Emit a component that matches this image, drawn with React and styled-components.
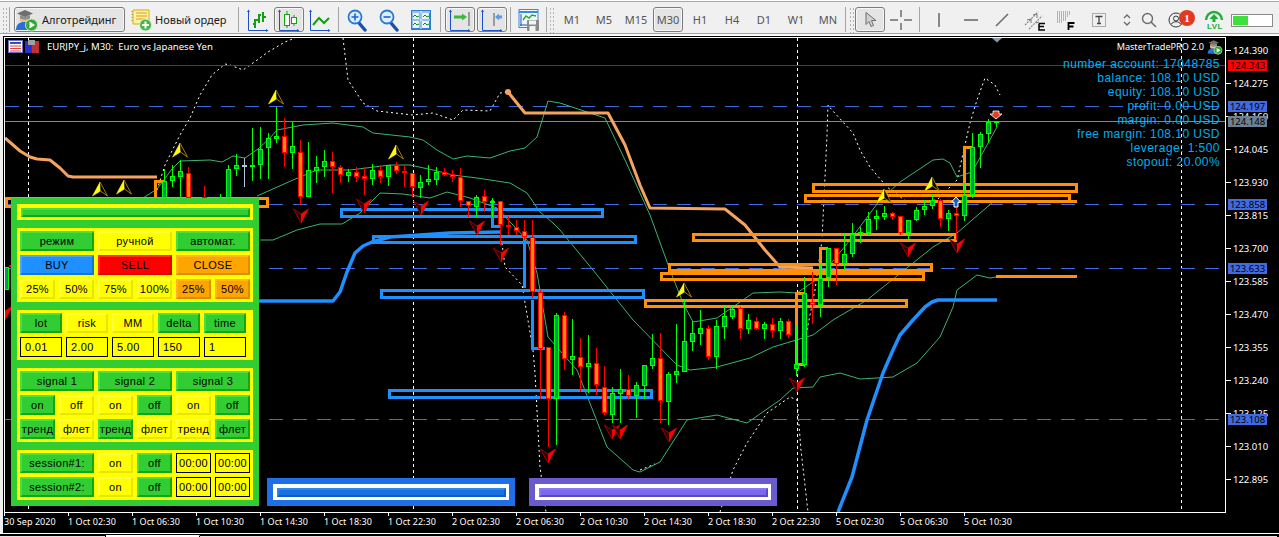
import React from "react";
import styled, { createGlobalStyle, css } from "styled-components";

const Global = createGlobalStyle`
  html, body { margin: 0; padding: 0; background: #f0f0f0; overflow: hidden; }
  * { box-sizing: border-box; }
`;
const UI = `"Noto Sans", "DejaVu Sans", sans-serif`;
const ARIAL = `"Liberation Sans", Arial, sans-serif`;

/* ---------- chart data ---------- */
const C = [
  [6,267,290,267,290,1],[11,265,266,262,272,0],
  [164,181,198,169,198,1],[172,176,181,165,187,1],[180,171,177,160,198,1],[188,173,198,167,198,0],[204,197,198,186,198,0],[220,197,198,194,198,1],
  [228,169,198,165,198,1],[236,165,169,154,176,1],[244,165,166,158,187,2],[252,165,166,128,181,1],
  [260,149,165,127,179,1],[268,138,148,133,179,1],[276,136,139,107,143,1],[284,136,153,118,167,0],[292,146,153,122,169,1],[300,152,197,140,205,0],[308,170,197,142,197,1],[316,167,171,156,183,1],[324,161,167,150,177,1],[332,161,167,152,193,0],[340,167,175,165,183,0],[348,172,176,169,182,1],[356,172,177,167,182,0],[364,176,179,167,195,0],[372,170,179,164,185,1],[380,170,177,165,183,0],[388,165,177,165,186,1],[396,165,171,162,174,0],[404,171,173,166,187,0],[412,173,187,173,197,0],[420,182,188,175,198,1],[428,179,182,165,185,1],[436,172,180,167,185,1],[444,172,175,168,176,0],[452,174,177,170,182,0],[460,177,201,168,207,0],[468,201,206,201,217,0],[476,197,207,195,217,1],[484,196,202,190,212,0],[492,201,203,198,217,1],[500,201,225,201,245,0],[508,225,227,216,235,0],[516,227,231,220,235,0],[524,231,237,220,240,0],[532,237,292,220,298,0],
  [540,292,349,290,399,0],[548,347,399,347,447,0],[556,315,399,313,445,1],[564,315,359,312,370,0],[572,356,360,319,375,1],[580,357,367,338,392,0],[588,363,367,335,393,1],[596,363,385,348,395,0],[604,387,413,366,415,0],[612,393,415,387,423,1],[620,389,394,369,423,1],[628,389,396,375,400,0],[636,385,396,382,418,1],[644,365,386,365,399,1],[652,358,366,334,369,1],[660,358,401,333,423,0],[668,374,402,372,425,1],[676,371,375,324,383,1],[684,341,372,300,372,1],[692,333,342,321,351,1],[700,328,334,310,345,1],[708,328,357,325,360,0],[716,326,357,320,369,1],[724,316,327,306,339,1],[732,309,317,306,319,1],[740,308,329,307,339,0],[748,320,329,314,334,1],[756,321,329,317,330,0],[764,324,329,322,339,1],[772,324,331,318,338,0],[780,321,331,318,339,1],[788,321,335,319,338,0],[796,364,369,325,376,1],[804,293,365,277,367,1],[812,302,305,272,324,0],
  [820,278,305,263,317,1],[828,248,278,248,287,1],[836,248,264,248,285,0],[844,254,264,233,270,1],[852,234,254,223,257,1],[860,232,234,227,243,1],[868,219,233,212,235,1],[876,216,219,210,230,1],[884,213,217,206,220,1],[892,213,217,212,220,0],[900,216,233,216,235,0],[908,220,233,220,239,1],[916,210,220,207,221,1],[924,206,210,200,215,1],[932,200,206,194,209,1],[940,200,219,199,227,0],[948,213,219,210,231,1],[956,213,216,207,240,0],[964,195,216,183,221,1],[972,147,195,133,198,1],[980,134,147,132,168,1],[988,122,134,119,143,1],[996,121,122,121,127,1],
];
const BLUE_BOX = [[340,208,604,218],[372,235,637,244],[380,289,645,299],[388,389,653,399]];
const ORANGE_BOX = [[5,197,269,208],[812,183,1078,193],[804,194,1071,203],[692,233,957,242],[668,263,933,272],[660,272,925,281],[644,299,908,308]];
const pts = (a) => a.map((p) => p.join(",")).join(" ");
const BLUE_LINES = [
  [[492,200],[492,226],[500,226]],[[524,237],[524,288]],[[532,300],[532,348],[545,348]],
];
const ORANGE_LINES = [
  [[155,198],[155,181],[164,181]],[[820,300],[820,248],[828,248]],[[804,364],[796,364],[796,293],[804,293]],[[964,190],[964,147],[972,147]],
  [[996,201],[1077,201]],[[996,276],[1077,276]],
];
const BANDS = [
  [[143,198],[157,189],[172,169],[180,161],[210,160],[222,162],[233,156],[245,158],[258,149],[270,138],[277,130],[303,125],[333,123],[363,127],[373,133],[410,137],[423,140],[437,150],[453,159],[467,156],[490,158],[510,151],[525,148],[537,137],[548,101],[560,103],[605,118],[625,160],[650,215],[670,270],[683,303],[693,322],[717,318],[753,293],[780,292],[797,293],[820,277],[850,240],[880,200],[900,182],[933,160],[943,159],[950,163],[957,177],[972,172],[997,127]],
  [[257,196],[293,180],[317,170],[350,170],[390,165],[410,165],[433,170],[453,175],[477,178],[510,183],[527,193],[540,212],[553,223],[560,230],[593,270],[633,320],[677,365],[690,370],[717,367],[750,358],[773,347],[813,335],[833,320],[867,300],[933,247],[957,233],[993,202]],
  [[260,240],[273,240],[297,230],[320,224],[342,224],[360,213],[380,193],[403,194],[430,198],[447,192],[470,198],[497,208],[527,240],[537,273],[548,337],[577,370],[607,447],[633,470],[640,472],[660,462],[687,420],[717,415],[747,423],[780,400],[793,388],[813,387],[820,377],[840,373],[860,379],[893,377],[917,363],[940,337],[953,307],[957,290],[977,275],[990,278],[996,277]],
];
const DOTTED = [
  [[157,190],[165,165],[180,135],[190,118],[200,95],[212,75],[225,64],[230,65],[243,70],[260,58],[268,52],[285,42],[295,38]],
  [[343,38],[348,80],[363,103],[377,111],[413,115],[433,113],[453,120],[463,110],[490,111],[500,93],[507,92]],
  [[502,243],[505,267],[522,285],[533,350],[535,373],[540,467],[546,512]],
  [[640,470],[655,464]],
  [[720,512],[733,470],[747,443],[767,413],[790,397],[797,400],[801,450],[808,512]],
  [[805,340],[815,290],[822,240],[827,135],[828,105],[832,110],[853,133],[860,150],[870,167],[887,187],[907,202],[937,200],[957,180],[970,123],[977,100],[985,78],[995,85],[1000,95]],
];
const UP = [[100,182],[124,180],[180,143],[276,90],[396,145],[684,283],[884,189],[932,177]];
const DOWN = [[5,320],[301,223],[364,213],[421,215],[477,235],[501,262],[548,463],[612,439],[620,439],[669,442],[797,392],[908,257],[957,253]];
const HLINES = [[106,"#4169e1"],[204,"#4169e1"],[268,"#4169e1"],[419,"#4169e1"]];

const PRICES = [[51,"124.390"],[84,"124.275"],[117,"124.160"],[150,"124.045"],[183,"123.930"],[216,"123.815"],[249,"123.700"],[282,"123.585"],[315,"123.470"],[348,"123.355"],[381,"123.240"],[414,"123.125"],[447,"123.010"],[480,"122.895"]];
const TAGS = [[65,"124.343","#ff0000"],[106,"124.197","#4169e1"],[121,"124.148","#708090"],[204,"123.858","#4169e1"],[268,"123.633","#4169e1"],[419,"123.108","#4169e1"]];
const TIMES = ["30 Sep 2020","1 Oct 02:30","1 Oct 06:30","1 Oct 10:30","1 Oct 14:30","1 Oct 18:30","1 Oct 22:30","2 Oct 02:30","2 Oct 06:30","2 Oct 10:30","2 Oct 14:30","2 Oct 18:30","2 Oct 22:30","5 Oct 02:30","5 Oct 06:30","5 Oct 10:30"];
const ACCOUNT = ["number account: 17048785","balance: 108.10 USD","equity: 108.10 USD","profit: 0.00 USD","margin: 0.00 USD","free margin: 108.10 USD","leverage: 1:500","stopout: 20.00%"];

/* ---------- page ---------- */
const Page = styled.div`
  width: 1279px; height: 537px; display: flex; flex-direction: column; overflow: hidden;
  background: #f0f0f0; font-family: ${UI};
`;
const Toolbar = styled.div`
  height: 36px; padding: 6px 0 0 2px; display: flex; align-items: flex-start;
  background: #f0f0f0; border-top: 1px solid #fff; box-shadow: inset 0 1px 0 #a8a8a8;
  position: relative;
  &::after { content: ""; position: absolute; left: 0; right: 0; top: 32px; height: 1px; background: #a0a0a0; }
  &::before { content: ""; position: absolute; left: 0; right: 0; top: 33px; height: 2px; background: #fafafa; }
`;
const Grip = styled.div`
  width: 5px; height: 26px; margin: 0 ${(p) => p.$mr ?? 0}px 0 ${(p) => p.$ml ?? 0}px;
  background-image: radial-gradient(circle, #b4b4b4 1px, transparent 1.1px);
  background-size: 3px 4px;
`;
const Sep = styled.div`
  width: 1px; height: 25px; background: #a6a6a6; margin-left: ${(p) => p.$ml ?? 0}px; margin-right: ${(p) => p.$mr ?? 0}px;
`;
const ToolBtn = styled.div`
  width: ${(p) => p.$w ?? 30}px; height: 25px; margin-left: ${(p) => p.$ml ?? 0}px; flex: none;
  display: flex; align-items: center; justify-content: ${(p) => (p.$left ? "flex-start" : "center")};
  gap: 3px; position: relative; border-radius: 3px; border: 1px solid transparent;
  font-size: 11px; color: #202020; white-space: nowrap;
  ${(p) => p.$active && css`background: #e4e4e4; border-color: #7c7c7c; box-shadow: inset 0 0 0 1px #f7f7f7;`}
`;
const PeriodBtn = styled(ToolBtn)`
  color: #555;
`;
const Frame = styled.div`
  flex: none; margin-left: 3px; padding: 1px 0 0 1px; background: #000; width: 1276px; height: 497px;
  display: flex; flex-direction: column;
`;
const ChartRow = styled.div`
  height: 476px; display: flex;
`;
const Plot = styled.div`
  width: 1222px; height: 476px; position: relative; border: 1px solid #fff; background: #000; overflow: hidden;
`;
const ChartSvg = styled.svg`
  display: block; width: 1220px; height: 474px;
`;
const PriceAxis = styled.div`
  width: 53px; position: relative; background: #000; color: #fff; font-size: 9.5px;
`;
const PriceLabel = styled.div`
  position: absolute; left: 0; height: 11px; line-height: 11px; padding-left: 7px; white-space: nowrap;
  &::before { content: ""; position: absolute; left: 0; top: 5px; width: 5px; height: 1px; background: #fff; }
`;
const PriceTag = styled.div`
  position: absolute; left: 2px; width: 39px; height: 11px; line-height: 11px; text-align: center; color: #000;
`;
const TimeAxis = styled.div`
  height: 20px; display: flex; background: #000; color: #fff; font-size: 9px; letter-spacing: 0.05px;
`;
const TimeCell = styled.div`
  width: 64px; flex: none; position: relative; padding-top: 2px; line-height: 14px; white-space: nowrap;
  &::before { content: ""; position: absolute; left: 0; top: 0; width: 1px; height: 3px; background: #fff; }
`;
const Tabs = styled.div`
  height: 4px; flex: none; display: flex; background: #000; border-top: 1px solid #fff; padding-top: 1px;
`;
const Tab = styled.div`
  width: ${(p) => p.$w}px; background: ${(p) => (p.$on ? "#fff" : "#e4e4e4")};
  border-top: 1px solid ${(p) => (p.$on ? "#fff" : "#000")}; border-right: 1px solid #000;
`;

/* overlays on the chart */
const ChartTitle = styled.div`
  position: absolute; left: 3px; top: 2px; display: flex; align-items: center; gap: 7px; color: #fff; font-size: 9.6px;
  white-space: pre; line-height: 14px;
`;
const Legend = styled.div`
  position: absolute; right: 2px; top: 1px; display: flex; align-items: center; gap: 3px; color: #fff; font-size: 9.1px; line-height: 14px;
`;
const Account = styled.div`
  position: absolute; right: 5px; top: 19px; text-align: right; font: 12px/14px ${ARIAL}; color: #00aeef; white-space: nowrap; letter-spacing: 0.45px;
`;

/* trade panel */
const tones = {
  green: ["#32cd32", "#46e046", "#12a812"],
  yellow: ["#ffff00", "#ffff40", "#e6e600"],
  blue: ["#1e90ff", "#46a6ff", "#0b78e0"],
  red: ["#ff0000", "#ff2a2a", "#e00000"],
  orange: ["#ffa500", "#ffb428", "#e08c00"],
};
const Panel = styled.div`
  position: absolute; left: 6px; top: 160px; width: 248px; height: 308px; padding: 6px;
  background: #32cd32; display: flex; flex-direction: column; gap: 8px;
`;
const Section = styled.div`
  background: #ffff00; padding: 3px; display: grid; gap: 4px;
  grid-template-columns: repeat(${(p) => p.$cols}, ${(p) => p.$size}px); grid-auto-rows: 20px;
`;
const Btn = styled.div`
  grid-column: span ${(p) => p.$span ?? 1};
  display: flex; align-items: center; justify-content: center; white-space: nowrap;
  font: 11px/1 ${ARIAL}; letter-spacing: 0.3px; color: #000;
  background: ${(p) => tones[p.$tone][0]};
  border: 2px solid; border-color: ${(p) => `${tones[p.$tone][1]} ${tones[p.$tone][2]} ${tones[p.$tone][2]} ${tones[p.$tone][1]}`};
`;
const Field = styled.div`
  background: #ffff00; border: 1px solid #000; color: #000; font: 11px/18px ${ARIAL}; letter-spacing: 0.3px;
  padding-left: ${(p) => (p.$center ? 0 : 4)}px; text-align: ${(p) => (p.$center ? "center" : "left")};
`;
const Strip = styled.div`
  height: 16px; padding: 4px 3px 3px 4px; background: ${(p) => p.$frame};
`;
const StripBar = styled.div`
  height: 9px; background: ${(p) => p.$fill}; border: 2px solid;
  border-color: ${(p) => `${p.$light} ${p.$dark} ${p.$dark} ${p.$light}`};
`;
const BottomBars = styled.div`
  position: absolute; left: 262px; top: 440px; display: flex; gap: 14px;
`;
const BarCard = styled.div`
  width: 248px; height: 28px; padding: 6px; background: ${(p) => p.$bg};
`;

/* status widgets */
const Badge = styled.div`
  position: absolute; left: 17px; top: 2px; width: 16px; height: 16px; border-radius: 50%;
  background: #e23a22; color: #fff; font: bold 11px/16px ${`"Liberation Serif", serif`}; text-align: center;
`;
const Meter = styled.div`
  width: 42px; height: 13px; margin-left: 2px; margin-top: 7px; border: 1px solid #8a8a8a; background: #fff; padding: 1px;
`;
const MeterFill = styled.div`
  height: 100%; background: #3ee03e;
`;

/* ---------- icons ---------- */
const Svg = ({ w = 24, h = 24, children }) => <svg width={w} height={h} viewBox={`0 0 ${w} ${h}`} style={{ display: "block", flex: "none" }}>{children}</svg>;
const Axes = () => (
  <g stroke="#1c50c8" strokeWidth="1" fill="#1c50c8">
    <path d="M2.5 3V22.5H21" fill="none" />
    <path d="M1 4L2.5 1.5 4 4ZM20 21l2.5 1.5L20 24Z" stroke="none" />
  </g>
);
const BarsIcon = () => (
  <Svg><Axes /><path d="M7 20V11M5 16h2M7 12h3M11 15V6M9 12h2M11 7h2M15 14V4M15 9h3" stroke="#12a012" strokeWidth="2" fill="none" transform="translate(2 0)" /></Svg>
);
const CandleIcon = () => (
  <Svg><Axes /><path d="M10 3v17M17 7v11" stroke="#12a012" /><rect x="7.5" y="6.5" width="5" height="11" fill="#fff" stroke="#12a012" /><rect x="14.5" y="9.5" width="5" height="6" fill="#fff" stroke="#12a012" /></Svg>
);
const LineIcon = () => (
  <Svg><Axes /><path d="M5 17l6-7 5 5 5-5" fill="none" stroke="#12a012" strokeWidth="2" /></Svg>
);
const Zoom = ({ plus }) => (
  <Svg w={20} h={24}>
    <path d="M12 15l6 7" stroke="#1c50a8" strokeWidth="3.4" strokeLinecap="round" />
    <circle cx="8" cy="9" r="6.5" fill="#dcefff" stroke="#2a78d8" strokeWidth="1.8" />
    <path d={plus ? "M4.5 9h7M8 5.5v7" : "M4.5 9h7"} stroke="#1c60c8" strokeWidth="1.6" />
  </Svg>
);
const TileIcon = () => (
  <Svg w={22} h={22}>
    <rect x="1" y="1" width="20" height="20" fill="#2c7fd8" />
    <path d="M2 3h18M2 11h18M11 2v18" stroke="#fff" />
    <rect x="2.500" y="4" width="7" height="6" fill="#e8f4ff" /><rect x="12" y="4" width="7" height="6" fill="#e8f4ff" />
    <rect x="2.500" y="12" width="7" height="7" fill="#e8f4ff" /><rect x="12" y="12" width="7" height="7" fill="#e8f4ff" />
    <path d="M3 8l2-2 2 2 2-1M13 8l2-2 2 2 2-1M3 16l2-2 2 2 2-1M13 16l2-2 2 2 2-1" stroke="#128a12" fill="none" />
  </Svg>
);
const ShiftIcon = () => (
  <Svg><Axes /><path d="M6 9h9" stroke="#3cb83c" strokeWidth="3" /><path d="M14 5.500l5 3.500-5 3.500Z" fill="#3cb83c" /><path d="M21 4v14" stroke="#555" /></Svg>
);
const AutoIcon = () => (
  <Svg><Axes /><path d="M14 5v13" stroke="#555" /><path d="M22 9h-4" stroke="#5a9ae8" strokeWidth="3" /><path d="M19 5.500L15 9l4 3.500Z" fill="#5a9ae8" /></Svg>
);
const TemplateIcon = () => (
  <Svg w={22} h={24}>
    <rect x="1" y="1.500" width="19" height="18" fill="#eef6ff" stroke="#3a8ad8" /><path d="M1 4h19" stroke="#3a8ad8" strokeWidth="2" />
    <path d="M3 6v12M2 17h15" stroke="#1c50c8" /><path d="M5 12l3-4 3 2 3-3 4 1" fill="none" stroke="#28a828" strokeWidth="1.4" />
    <rect x="9" y="12" width="12" height="11" rx="1" fill="#8a8a8a" /><rect x="11" y="12.500" width="7" height="4" fill="#f4f4f4" /><rect x="11.500" y="18" width="6" height="5" fill="#f4f4f4" />
  </Svg>
);
const AlgoIcon = ({ s = 24 }) => (
  <svg width={s} height={s} viewBox="0 0 24 24" style={{ display: "block", flex: "none" }}>
    <circle cx="9" cy="11" r="4.500" fill="#e8c090" />
    <path d="M1 22c0-6 4-8 8-8s8 2 8 8Z" fill="#2a6ed8" />
    <path d="M2 5.500L10 2l8 3.500-8 3.500Z" fill="#6e6e6e" /><path d="M5 7v3.500c3 1.500 7 1.500 10 0V7l-5 2Z" fill="#8e8e8e" />
    <circle cx="16.500" cy="17" r="6" fill="#34a834" stroke="#bfe8bf" /><path d="M14.500 13.500v7l5.500-3.500Z" fill="#fff" />
  </svg>
);
const OrderIcon = () => (
  <Svg w={21} h={24}>
    <path d="M2 2h16v14H2Z" fill="#fff2a0" stroke="#d8a820" />
    <path d="M5 5h11M5 8h11M5 11h9" stroke="#d0a020" />
    <path d="M1 3v1M1 6v1M1 9v1M1 12v1" stroke="#b08810" />
    <circle cx="14.500" cy="17" r="6" fill="#46b846" stroke="#d8f0d8" /><path d="M11 17h7M14.500 13.500v7" stroke="#fff" strokeWidth="2" />
  </Svg>
);
const G = "#6c6c6c";
const Cursor = () => <Svg w={14} h={18}><path d="M3 1.500v12l3-3 2 5 2.500-1-2-5h4.500Z" fill="#d0d0d0" stroke={G} /></Svg>;
const Cross = () => <Svg w={22} h={22}><path d="M0 11h8M14 11h8M11 1v7M11 14v7" stroke={G} strokeWidth="1.5" /></Svg>;
const VLine = () => <Svg w={4} h={16}><path d="M2 1v14" stroke={G} strokeWidth="1.6" /></Svg>;
const HLine = () => <Svg w={16} h={4}><path d="M1 2h14" stroke={G} strokeWidth="1.6" /></Svg>;
const Trend = () => <Svg w={14} h={14}><path d="M1 13L13 1" stroke={G} strokeWidth="1.6" /></Svg>;
const ChannelE = () => (
  <Svg w={22} h={22}>
    <path d="M1 16L14 3M5 20L18 7" stroke="#888" strokeWidth="1.2" strokeDasharray="2 1" />
    <path d="M3 11l4-1v4M9 6l4-1v4M12 14l3-1" stroke="#777" fill="none" />
    <path d="M15 14.500h6M15 14.500v6.500h6M15 17.500h5" stroke="#000" strokeWidth="1.5" fill="none" />
  </Svg>
);
const FiboF = () => (
  <Svg w={20} h={22}>
    <path d="M1 3h13M1 5h13M1 7h12M1 9h10M1 11h9M1 13h5" stroke="#777" strokeDasharray="1 1" />
    <path d="M12.500 21v-7h6M12.500 17.500h5" stroke="#000" strokeWidth="1.8" fill="none" />
  </Svg>
);
const TextTool = () => (
  <Svg w={14} h={14}><rect x=".5" y=".5" width="13" height="13" fill="none" stroke="#666" strokeDasharray="1 1" /><path d="M3.500 3.500h7M7 3.500v7M5 10.500h4" stroke="#444" strokeWidth="1.3" fill="none" /></Svg>
);
const Updown = () => <Svg w={8} h={14}><path d="M1 5l3-3 3 3M1 9l3 3 3-3" stroke={G} strokeWidth="1.4" fill="none" /></Svg>;
const Search = () => <Svg w={16} h={16}><circle cx="6.500" cy="6.500" r="5" fill="none" stroke={G} strokeWidth="1.4" /><path d="M10 10l5 5" stroke={G} strokeWidth="1.6" /></Svg>;
const UserIcon = () => <Svg w={16} h={18}><circle cx="8" cy="9" r="7" fill="none" stroke="#333" /><circle cx="8" cy="7.500" r="2.500" fill="none" stroke="#333" /><path d="M3.500 13c1-3 8-3 9 0" fill="none" stroke="#333" /></Svg>;
const Lvl = () => (
  <svg width="20" height="22" viewBox="0 0 20 22" style={{ display: "block" }}>
    <path d="M2 11a8 8 0 0 1 16 0" fill="none" stroke="#1fae3a" strokeWidth="2.4" />
    <path d="M10 5l4.500 5h-3v3h-3v-3h-3Z" fill="#1fae3a" />
  </svg>
);
const LvlText = styled.div`
  position: absolute; left: 7px; top: 14px; font: bold 8px/10px ${ARIAL}; color: #1fae3a; letter-spacing: 0.4px;
`;

/* ---------- chart ---------- */
const UpArrow = ({ x, y }) => (
  <g transform={`translate(${x} ${y})`}>
    <path d="M0 0L7.500 14 0.500 9-7.500 14Z" fill="#000" stroke="#c8a000" strokeWidth=".8" />
    <path d="M0 0L0.500 9-7.500 14Z" fill="#ffff00" />
  </g>
);
const DownArrow = ({ x, y }) => (
  <g transform={`translate(${x} ${y})`}>
    <path d="M0 0L7.500 -14 0 -9-7.500 -14Z" fill="#300000" stroke="#c00000" strokeWidth=".8" />
    <path d="M0 0L7.500 -14 0 -9Z" fill="#ff0000" />
  </g>
);
const Chart = () => (
  <ChartSvg viewBox="5 38 1220 474">
    <g stroke="#fff" strokeDasharray="3 3" shapeRendering="crispEdges">
      {[28, 413, 797, 1181].map((x) => <line key={x} x1={x + 0.5} x2={x + 0.5} y1="38" y2="512" />)}
    </g>
    <g fill="none" stroke="#fff" strokeWidth="1" strokeDasharray="2 3">
      {DOTTED.map((d, i) => <polyline key={i} points={pts(d)} />)}
    </g>
    <g shapeRendering="crispEdges" strokeDasharray="14 10">
      {HLINES.map(([y, c]) => <line key={y} x1="5" x2="1222" y1={y + 0.5} y2={y + 0.5} stroke={c} />)}
    </g>
    <g shapeRendering="crispEdges">
      <line x1="5" x2="1225" y1="65.500" y2="65.500" stroke="#e00000" />
      <line x1="5" x2="1225" y1="121.500" y2="121.500" stroke="#808890" />
    </g>
    <g fill="none" stroke="#3cb371" strokeWidth="1">
      {BANDS.map((d, i) => <polyline key={i} points={pts(d)} />)}
    </g>
    <polyline fill="none" stroke="#f4a460" strokeWidth="3" strokeLinejoin="round" points={pts([[5,138],[20,151],[30,157],[37,159],[50,160],[60,168],[68,176],[73,177],[157,177]])} />
    <polyline fill="none" stroke="#f4a460" strokeWidth="3" strokeLinejoin="round" points={pts([[508,92],[525,113],[608,113],[625,145],[640,185],[650,208],[725,209],[745,225],[765,250],[780,267],[813,268]])} />
    <circle cx="508" cy="92" r="3" fill="#f4a460" />
    <g fill="none" stroke="#1e90ff" strokeWidth="3" shapeRendering="crispEdges">
      {BLUE_BOX.map(([a, b, c, d]) => <rect key={a} x={a + 1.5} y={b + 1.5} width={c - a - 3} height={d - b - 3} />)}
      {BLUE_LINES.map((d, i) => <polyline key={i} points={pts(d)} />)}
    </g>
    <g fill="none" stroke="#1e90ff" strokeWidth="3.500" strokeLinejoin="round">
      <polyline points={pts([[258,301],[333,301],[340,292],[347,272],[355,253],[363,246],[372,242],[390,237],[450,233],[500,232]])} />
      <polyline points={pts([[838,512],[852,477],[867,420],[883,373],[893,350],[900,335],[913,320],[925,307],[932,302],[938,300],[997,300]])} />
    </g>
    <g fill="none" stroke="#ff9008" strokeWidth="3" shapeRendering="crispEdges">
      {ORANGE_BOX.map(([a, b, c, d]) => <rect key={a} x={a + 1.5} y={b + 1.5} width={c - a - 3} height={d - b - 3} />)}
      {ORANGE_LINES.map((d, i) => <polyline key={i} points={pts(d)} />)}
    </g>
    <g shapeRendering="crispEdges">
      {C.map(([x, t, b, h, l, g]) => {
        const stroke = g === 1 ? "#00ff00" : g === 2 ? "#b0c4de" : "#ff0000";
        const fill = g === 1 ? "#12905a" : g === 2 ? "#b0c4de" : "#ff8c00";
        return (
          <g key={x}>
            <rect x={x} y={h} width="1" height={l - h} fill={stroke} />
            {b - t >= 2 && <rect x={x - 1.5} y={t + 0.5} width="4" height={b - t - 1} fill={fill} stroke={stroke} />}
            {b - t < 2 && <rect x={x - 2} y={t} width="5" height="2" fill={stroke} />}
          </g>
        );
      })}
    </g>
    {UP.map(([x, y]) => <UpArrow key={x} x={x} y={y} />)}
    {DOWN.map(([x, y]) => <DownArrow key={x} x={x} y={y} />)}
    <path d="M993 111h6v3h3l-6 5-6-5h3Z" fill="#e04020" stroke="#fff" strokeWidth=".8" />
    <path d="M956 197l4.500 5h-2.500v5h-4v-5h-2.500Z" fill="#1060c0" stroke="#fff" strokeWidth="1" />
    <path d="M992 38h10l-5 4.500Z" fill="#8898a8" />
  </ChartSvg>
);

const WinIcons = () => (
  <svg width="32" height="14" viewBox="0 0 32 14" style={{ display: "block" }}>
    <rect x=".5" y=".5" width="14" height="12" fill="#fff" stroke="#7070c0" />
    <rect x="2" y="2" width="11" height="2" fill="#3050c0" />
    <path d="M2 6h11M2 8.500h11M2 11h11" stroke="#e04040" />
    <rect x="17" y="1" width="7" height="12" fill="#2a30d0" /><rect x="24" y="1" width="7" height="12" fill="#c03030" />
    <rect x="20" y="0" width="7" height="5" fill="#a0a0a0" />
  </svg>
);

const bevel = { blue: ["#1f70e8", "#2a8af0", "#0a5cd0", "#1a70e0"], purple: ["#6a5acd", "#8a78f8", "#5a48c0", "#7b68ee"] };
const PanelBar = ({ kind }) => {
  const [bg, light, dark, fill] = bevel[kind];
  return (
    <BarCard $bg={bg}>
      <Strip $frame="#fff"><StripBar $fill={fill} $light={light} $dark={dark} /></Strip>
    </BarCard>
  );
};

const row = (labels, tone) => labels.map((l, i) => ({ l, tone: Array.isArray(tone) ? tone[i] : tone }));
const B = ({ items, span }) => items.map((b, i) => <Btn key={i} $tone={b.tone} $span={span}>{b.l}</Btn>);

const TradePanel = () => (
  <Panel>
    <Strip $frame="#ffff00"><StripBar $fill="#32cd32" $light="#46e046" $dark="#12a812" /></Strip>
    <Section $cols={6} $size={35}>
      <B span={2} items={row(["режим", "ручной", "автомат."], ["green", "yellow", "green"])} />
      <B span={2} items={row(["BUY", "SELL", "CLOSE"], ["blue", "red", "orange"])} />
      <B items={row(["25%", "50%", "75%", "100%", "25%", "50%"], ["yellow", "yellow", "yellow", "yellow", "orange", "orange"])} />
    </Section>
    <Section $cols={5} $size={42}>
      <B items={row(["lot", "risk", "MM", "delta", "time"], ["green", "yellow", "yellow", "green", "green"])} />
      {["0.01", "2.00", "5.00", "150", "1"].map((v) => <Field key={v}>{v}</Field>)}
    </Section>
    <Section $cols={6} $size={35}>
      <B span={2} items={row(["signal 1", "signal 2", "signal 3"], "green")} />
      <B items={row(["on", "off", "on", "off", "on", "off"], ["green", "yellow", "yellow", "green", "yellow", "green"])} />
      <B items={row(["тренд", "флет", "тренд", "флет", "тренд", "флет"], ["green", "yellow", "green", "yellow", "yellow", "green"])} />
    </Section>
    <Section $cols={6} $size={35}>
      {["session#1:", "session#2:"].map((s) => (
        <React.Fragment key={s}>
          <Btn $tone="green" $span={2}>{s}</Btn>
          <Btn $tone="yellow">on</Btn>
          <Btn $tone="green">off</Btn>
          <Field $center>00:00</Field>
          <Field $center>00:00</Field>
        </React.Fragment>
      ))}
    </Section>
  </Panel>
);

export default function App() {
  return (
    <Page>
      <Global />
      <Toolbar>
        <Grip $mr={2} />
        <Sep $mr={4} />
        <ToolBtn $w={111} $active $left><AlgoIcon />Алготрейдинг</ToolBtn>
        <ToolBtn $w={101} $ml={5} $left><OrderIcon />Новый ордер</ToolBtn>
        <Sep $ml={7} />
        <ToolBtn $ml={4}><BarsIcon /></ToolBtn>
        <ToolBtn $ml={1} $active><CandleIcon /></ToolBtn>
        <ToolBtn $ml={1}><LineIcon /></ToolBtn>
        <Sep $ml={3} />
        <ToolBtn $ml={3}><Zoom plus /></ToolBtn>
        <ToolBtn $ml={2}><Zoom /></ToolBtn>
        <ToolBtn $ml={2}><TileIcon /></ToolBtn>
        <Sep $ml={4} />
        <ToolBtn $ml={4} $active><ShiftIcon /></ToolBtn>
        <ToolBtn $ml={2} $active><AutoIcon /></ToolBtn>
        <Sep $ml={3} />
        <ToolBtn $ml={3}><TemplateIcon /></ToolBtn>
        <Sep $ml={2} />
        <Grip $ml={2} $mr={1} />
        {["M1", "M5", "M15", "M30", "H1", "H4", "D1", "W1", "MN"].map((t) => (
          <PeriodBtn key={t} $ml={2} $active={t === "M30"}>{t}</PeriodBtn>
        ))}
        <Sep $ml={2} />
        <Grip $ml={3} $mr={1} />
        <ToolBtn $active><Cursor /></ToolBtn>
        <ToolBtn $ml={1}><Cross /></ToolBtn>
        <Sep $ml={3} />
        <ToolBtn $ml={4}><VLine /></ToolBtn>
        <ToolBtn $ml={2}><HLine /></ToolBtn>
        <ToolBtn $ml={1}><Trend /></ToolBtn>
        <ToolBtn $ml={3}><ChannelE /></ToolBtn>
        <ToolBtn $ml={1}><FiboF /></ToolBtn>
        <ToolBtn $ml={3}><TextTool /></ToolBtn>
        <ToolBtn $w={20} $ml={3}><Updown /></ToolBtn>
        <ToolBtn $w={20} $ml={2}><Search /></ToolBtn>
        <ToolBtn $w={30} $ml={2}><UserIcon /><Badge>1</Badge></ToolBtn>
        <ToolBtn $w={30} $ml={8}><Lvl /><LvlText>LVL</LvlText></ToolBtn>
        <Meter><MeterFill style={{ width: "40%" }} /></Meter>
      </Toolbar>
      <Frame>
        <ChartRow>
          <Plot>
            <Chart />
            <ChartTitle><WinIcons />EURJPY_j, M30:  Euro vs Japanese Yen</ChartTitle>
            <Legend>MasterTradePRO 2.0 <AlgoIcon s={16} /></Legend>
            <Account>{ACCOUNT.map((l) => <div key={l}>{l}</div>)}</Account>
            <TradePanel />
            <BottomBars><PanelBar kind="blue" /><PanelBar kind="purple" /></BottomBars>
          </Plot>
          <PriceAxis>
            {PRICES.map(([y, p]) => <PriceLabel key={p} style={{ top: y - 37 - 6 }}>{p}</PriceLabel>)}
            {TAGS.map(([y, p, c]) => <PriceTag key={p} style={{ top: y - 37 - 5, background: c }}>{p}</PriceTag>)}
          </PriceAxis>
        </ChartRow>
        <TimeAxis>
          {TIMES.map((t) => <TimeCell key={t}>{t}</TimeCell>)}
        </TimeAxis>
      </Frame>
      <Tabs><Tab $w={106} /><Tab $w={94} $on /><Tab $w={1078} /></Tabs>
    </Page>
  );
}
